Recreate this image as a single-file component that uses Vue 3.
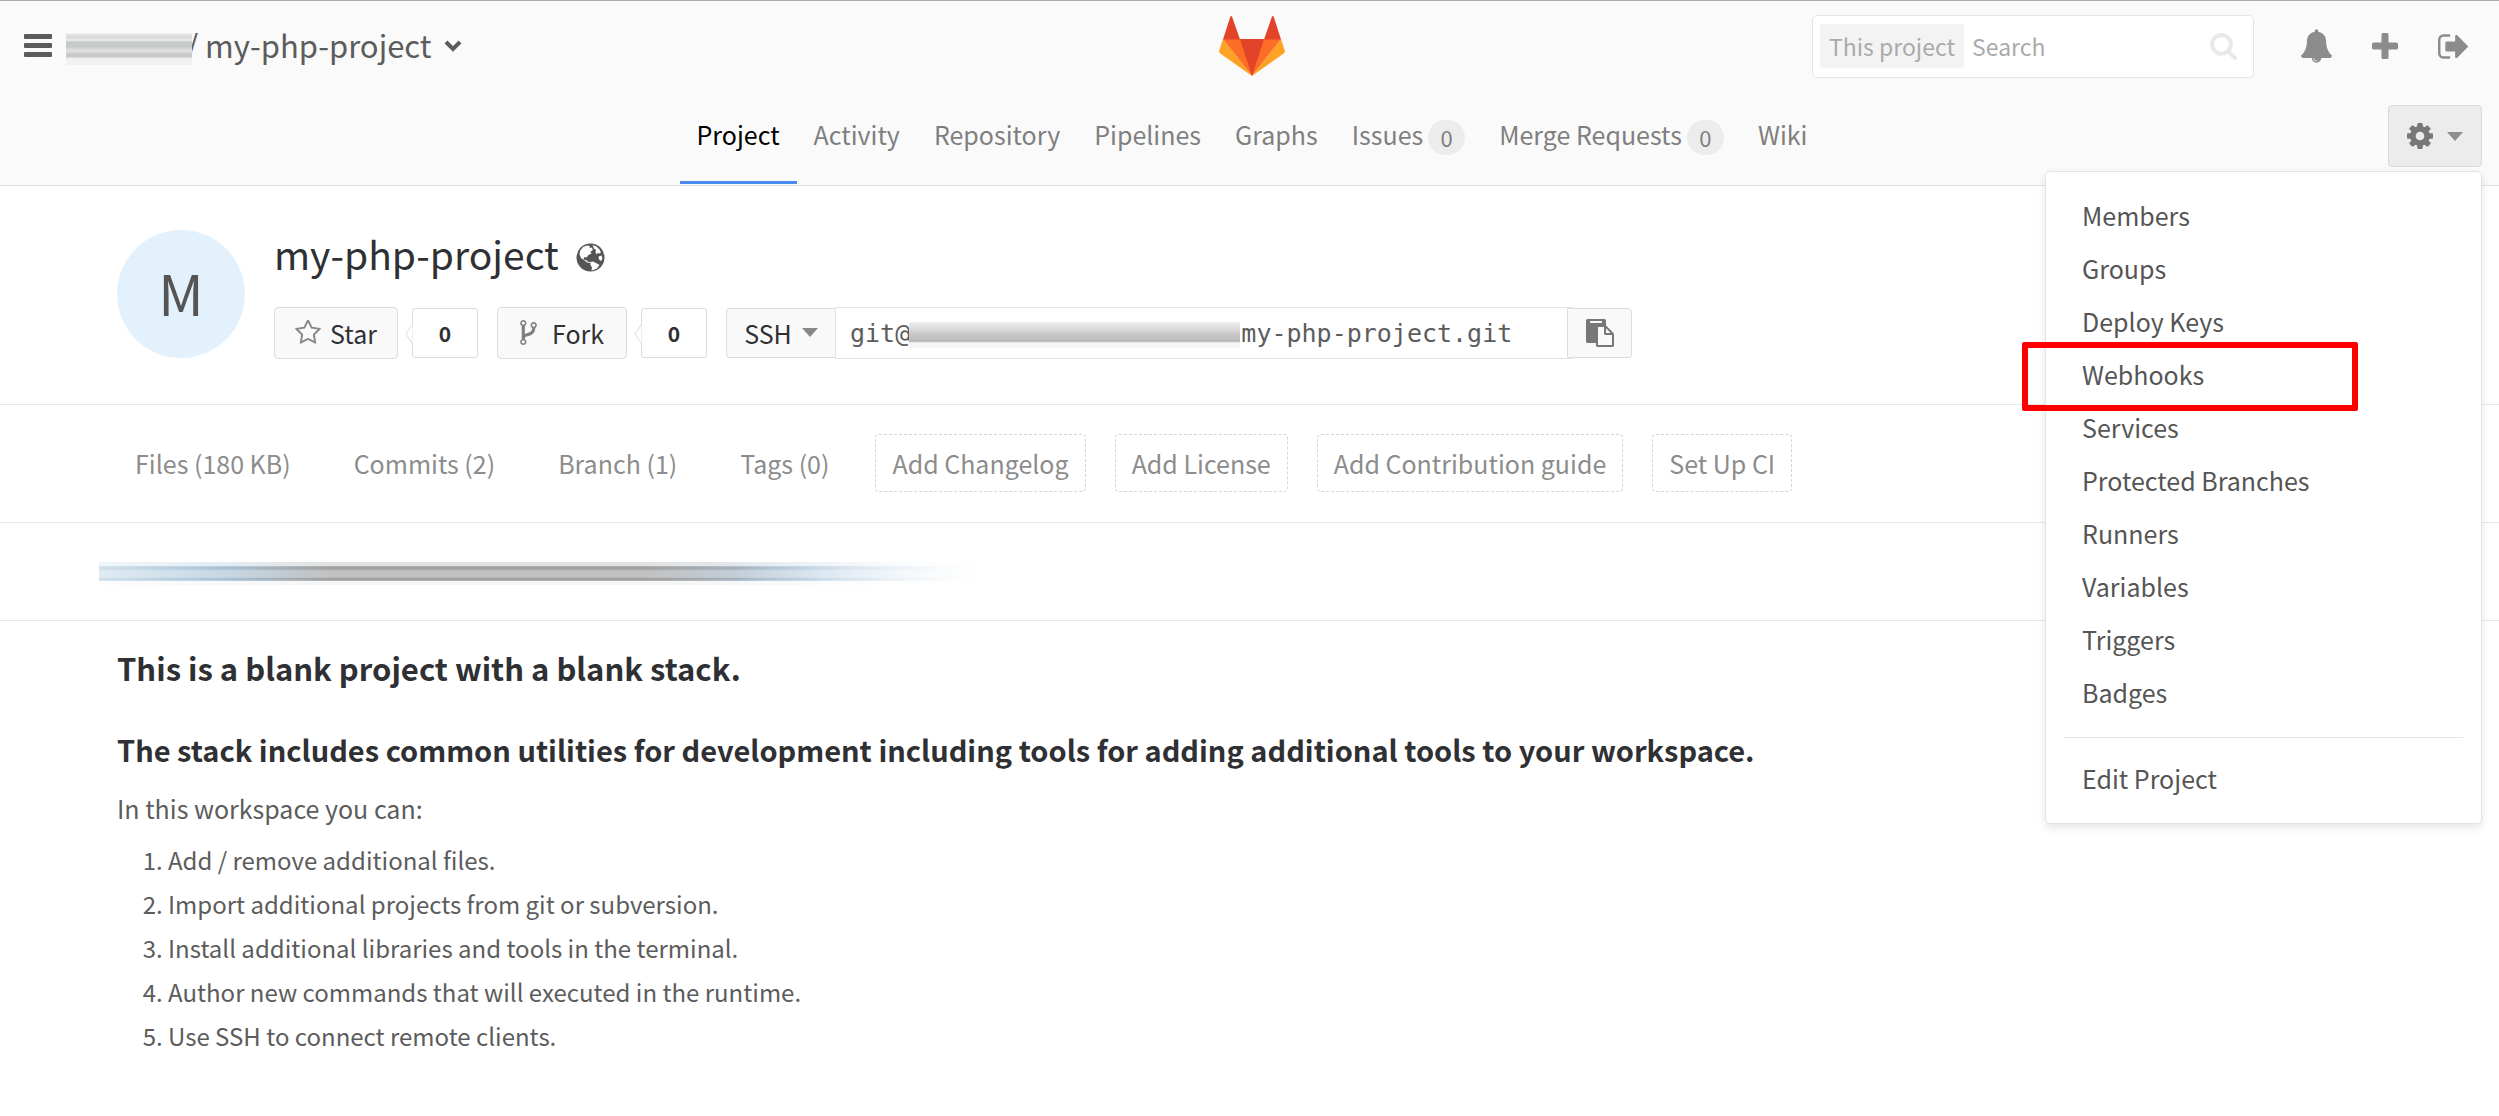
<script setup>
const tabs = [
  { label: 'Project', active: true },
  { label: 'Activity' },
  { label: 'Repository' },
  { label: 'Pipelines' },
  { label: 'Graphs' },
  { label: 'Issues', count: 0 },
  { label: 'Merge Requests', count: 0 },
  { label: 'Wiki' },
]

const settings = [
  'Members',
  'Groups',
  'Deploy Keys',
  'Webhooks',
  'Services',
  'Protected Branches',
  'Runners',
  'Variables',
  'Triggers',
  'Badges',
]

const stats = ['Files (180 KB)', 'Commits (2)', 'Branch (1)', 'Tags (0)']
const suggestions = ['Add Changelog', 'Add License', 'Add Contribution guide', 'Set Up CI']

const steps = [
  'Add / remove additional files.',
  'Import additional projects from git or subversion.',
  'Install additional libraries and tools in the terminal.',
  'Author new commands that will executed in the runtime.',
  'Use SSH to connect remote clients.',
]

const cloneUrl = 'git@' + '\u00a0'.repeat(22) + 'my-php-project.git'

const icons = {
  bell: 'M912 1696q0-16-16-16-59 0-101.5-42.5t-42.5-101.5q0-16-16-16t-16 16q0 73 51.5 124.5t124.5 51.5q16 0 16-16zm816-288q0 52-38 90t-90 38h-448q0 106-75 181t-181 75-181-75-75-181h-448q-52 0-90-38t-38-90q50-42 91-88t85-119.5 74.5-158.5 50-206 19.5-260q0-152 117-282.5t307-158.5q-8-19-8-39 0-40 28-68t68-28 68 28 28 68q0 20-8 39 190 28 307 158.5t117 282.5q0 139 19.5 260t50 206 74.5 158.5 85 119.5 91 88z',
  cog: 'M1152 896q0-106-75-181t-181-75-181 75-75 181 75 181 181 75 181-75 75-181zm512-109v222q0 12-8 23t-20 13l-185 28q-19 54-39 91 35 50 107 138 10 12 10 25t-9 23q-27 37-99 108t-94 71q-12 0-26-9l-138-108q-44 23-91 38-16 136-29 186-7 28-36 28h-222q-14 0-24.5-8.5t-11.5-21.5l-28-184q-49-16-90-37l-141 107q-10 9-25 9-14 0-25-11-126-114-165-168-7-10-7-23 0-12 8-23 15-21 51-66.5t54-70.5q-27-50-41-99l-183-27q-13-2-21-12.5t-8-23.5v-222q0-12 8-23t19-13l186-28q14-46 39-92-40-57-107-138-10-12-10-24 0-10 9-23 26-36 98.5-107.5t94.5-71.5q13 0 26 10l138 107q44-23 91-38 16-136 29-186 7-28 36-28h222q14 0 24.5 8.5t11.5 21.5l28 184q49 16 90 37l142-107q9-9 24-9 13 0 25 10 129 119 165 170 7 8 7 22 0 12-8 23-15 21-51 66.5t-54 70.5q26 50 41 98l183 28q13 2 21 12.5t8 23.5z',
  plus: 'M1600 736v192q0 40-28 68t-68 28h-416v416q0 40-28 68t-68 28h-192q-40 0-68-28t-28-68v-416h-416q-40 0-68-28t-28-68v-192q0-40 28-68t68-28h416v-416q0-40 28-68t68-28h192q40 0 68 28t28 68v416h416q40 0 68 28t28 68z',
  signOut: 'M704 1440q0 4 1 20t.5 26.5-3 23.5-10 19.5-20.5 6.5h-320q-119 0-203.5-84.5t-84.5-203.5v-704q0-119 84.5-203.5t203.5-84.5h320q13 0 22.5 9.5t9.5 22.5q0 4 1 20t.5 26.5-3 23.5-10 19.5-20.5 6.5h-320q-66 0-113 47t-47 113v704q0 66 47 113t113 47h312l11.5 1 11.5 3 8 5.5 7 9 2 13.5zm928-544q0 26-19 45l-544 544q-19 19-45 19t-45-19-19-45v-288h-448q-26 0-45-19t-19-45v-384q0-26 19-45t45-19h448v-288q0-26 19-45t45-19 45 19l544 544q19 19 19 45z',
  search: 'M1216 832q0-185-131.5-316.5t-316.5-131.5-316.5 131.5-131.5 316.5 131.5 316.5 316.5 131.5 316.5-131.5 131.5-316.5zm512 832q0 52-38 90t-90 38q-54 0-90-38l-343-342q-179 124-399 124-143 0-273.5-55.5t-225-150-150-225-55.5-273.5 55.5-273.5 150-225 225-150 273.5-55.5 273.5 55.5 225 150 150 225 55.5 273.5q0 220-124 399l343 343q37 37 37 90z',
  star: 'M1201 1004l306-297-422-62-189-382-189 382-422 62 306 297-73 421 378-199 377 199zm527-357q0 22-26 48l-363 354 86 500q1 7 1 20 0 50-41 50-19 0-40-12l-449-236-449 236q-22 12-40 12-21 0-31.5-14.5t-10.5-35.5q0-6 2-20l86-500-364-354q-25-27-25-48 0-37 56-46l502-73 225-455q19-41 49-41t49 41l225 455 502 73q56 9 56 46z',
  fork: 'M672 1472q0-40-28-68t-68-28-68 28-28 68 28 68 68 28 68-28 28-68zm0-1152q0-40-28-68t-68-28-68 28-28 68 28 68 68 28 68-28 28-68zm640 128q0-40-28-68t-68-28-68 28-28 68 28 68 68 28 68-28 28-68zm96 0q0 52-26 96.5t-70 69.5q-2 287-226 414-67 38-203 81-128 40-169.5 71t-41.5 100v26q44 25 70 69.5t26 96.5q0 80-56 136t-136 56-136-56-56-136q0-52 26-96.5t70-69.5v-820q-44-25-70-69.5t-26-96.5q0-80 56-136t136-56 136 56 56 136q0 52-26 96.5t-70 69.5v497q54-26 154-57 55-17 87.5-29.5t70.5-31 59-39.5 40.5-51 28-69.5 8.5-91.5q-44-25-70-69.5t-26-96.5q0-80 56-136t136-56 136 56 56 136z',
  paste: 'M768 1664h896v-640h-416q-40 0-68-28t-28-68v-416h-384v1152zm256-1440v-64q0-13-9.5-22.5t-22.5-9.5h-704q-13 0-22.5 9.5t-9.5 22.5v64q0 13 9.5 22.5t22.5 9.5h704q13 0 22.5-9.5t9.5-22.5zm256 672h299l-299-299v299zm512 128v672q0 40-28 68t-68 28h-960q-40 0-68-28t-28-68v-160h-544q-40 0-68-28t-28-68v-1344q0-40 28-68t68-28h1088q40 0 68 28t28 68v328q21 13 36 28l408 408q28 28 48 76t20 88z',
}
</script>

<template>
  <div class="page">
    <header class="header">
      <div class="bar">
        <div class="crumbs">
          <button class="plain" aria-label="Toggle navigation">
            <svg width="28" height="24" viewBox="0 0 28 24" fill="#5c5c5c">
              <rect width="28" height="5" rx="1" />
              <rect y="9" width="28" height="5" rx="1" />
              <rect y="18" width="28" height="5" rx="1" />
            </svg>
          </button>
          <span class="smear-owner"></span>
          <a href="#" class="crumb">/ my-php-project</a>
          <button class="plain" aria-label="Switch project">
            <svg width="18" height="12" viewBox="0 0 18 12" fill="none" stroke="#5c5c5c" stroke-width="4">
              <path d="M2 2l7 7 7-7" />
            </svg>
          </button>
        </div>

        <a href="#" class="logo" aria-label="Dashboard">
          <svg width="66" height="60" viewBox="0 0 66 60">
            <path fill="#fca326" d="M4 23L.3 34.200q-.6 2 1 3.200L33 60zM62 23l3.700 11.200q.6 2-1 3.200L33 60z" />
            <path fill="#fc6d26" d="M4 23h58L33 60z" />
            <path fill="#e24329" d="M21 23h24L33 60z" />
            <path fill="#e24329" d="M4 23.500L11.200 1Q12.200-.8 13.200 1L21 23.500z" />
            <path fill="#e24329" d="M62 23.500L54.800 1Q53.800-.8 52.800 1L45 23.500z" />
          </svg>
        </a>

        <div class="tools">
          <form class="search" @submit.prevent>
            <label class="scope" for="search">This project</label>
            <input id="search" type="text" placeholder="Search" />
            <svg width="27" height="27" viewBox="64 128 1664 1664" fill="#e7e9ed"><path :d="icons.search" /></svg>
          </form>
          <nav class="actions">
            <a href="#" aria-label="Todos"><svg width="31" height="34" viewBox="64 0 1664 1792"><path :d="icons.bell" /></svg></a>
            <a href="#" aria-label="New project"><svg width="26" height="26" viewBox="192 128 1408 1408"><path :d="icons.plus" /></svg></a>
            <a href="#" aria-label="Sign out"><svg width="30" height="25" viewBox="64 256 1568 1280"><path :d="icons.signOut" /></svg></a>
          </nav>
        </div>
      </div>

      <div class="subnav">
        <nav class="tabs">
          <a v-for="t in tabs" :key="t.label" href="#" class="tab" :class="{ active: t.active }">
            {{ t.label }}<span v-if="t.count !== undefined" class="badge">{{ t.count }}</span>
          </a>
        </nav>
        <div class="settings">
          <button class="gear" aria-label="Project settings" aria-expanded="true">
            <svg width="26" height="26" viewBox="128 128 1536 1536" fill="#7a7777"><path :d="icons.cog" /></svg>
            <svg width="16" height="9" viewBox="0 0 16 9" fill="#8f8f8f"><path d="M0 0h16L8 9z" /></svg>
          </button>
          <ul class="menu">
            <li v-for="s in settings" :key="s" :class="{ marked: s === 'Webhooks' }">
              <a href="#">{{ s }}</a>
            </li>
            <li class="divider" role="separator"></li>
            <li><a href="#">Edit Project</a></li>
          </ul>
        </div>
      </div>
    </header>

    <main>
      <section class="project">
        <div class="avatar">M</div>
        <div class="info">
          <h1>
            my-php-project
            <svg width="29" height="29" viewBox="0 0 29 29">
              <circle cx="14.500" cy="14.500" r="14" fill="#555" />
              <g fill="#fff">
                <path d="M4 8l3-4 4-1.500 3 .5-.5 2 2-.5 1.500 2-2.500 2.500 1 1.500-3 1.500-2 2.500-1.500-.5-1.500 1 1 2 1.500 0 1.500 1.500 2.500.5 1.500 1-4.500-.5-3-2.500-3-2-1.500-3.500z" />
                <path d="M14.500 19l2.500-.5 4 2 2.500 1.500-2.500 3.500-3.500 1.500-2 .5.500-3-1.500-2.500z" />
                <path d="M16.500 2l4 1.500 3 3 1.500 3-1.500 1-2-.5-1 1.500-1-2 .5-2.500-2-1.500z" />
                <path d="M22.500 13.500l3-1 1 3-1.500 2.500-2-1.500z" />
              </g>
            </svg>
          </h1>
          <div class="controls">
            <button class="btn star">
              <svg width="26" height="25" viewBox="64 96 1664 1600" fill="#8a8a8a"><path :d="icons.star" /></svg>
              Star
            </button>
            <span class="count">
              <svg width="8" height="22" viewBox="0 0 8 22" fill="#fff" stroke="#dcdcdc"><path d="M7.500 1L1 11l6.500 10" /></svg>
              0
            </span>
            <button class="btn fork">
              <svg width="17" height="25" viewBox="384 128 1024 1536" fill="#7f7f7f"><path :d="icons.fork" /></svg>
              Fork
            </button>
            <span class="count">
              <svg width="8" height="22" viewBox="0 0 8 22" fill="#fff" stroke="#dcdcdc"><path d="M7.500 1L1 11l6.500 10" /></svg>
              0
            </span>
            <div class="clone">
              <button class="btn protocol">
                SSH
                <svg width="16" height="9" viewBox="0 0 16 9" fill="#888"><path d="M0 0h16L8 9z" /></svg>
              </button>
              <div class="url">
                <input type="text" readonly aria-label="Project clone URL" :value="cloneUrl" />
                <span class="smear-url"></span>
              </div>
              <button class="btn copy" aria-label="Copy to clipboard">
                <svg width="28" height="28" viewBox="0 0 1792 1792" fill="#777"><path :d="icons.paste" /></svg>
              </button>
            </div>
          </div>
        </div>
      </section>

      <nav class="stats">
        <a v-for="s in stats" :key="s" href="#">{{ s }}</a>
        <a v-for="s in suggestions" :key="s" href="#" class="dashed">{{ s }}</a>
      </nav>

      <div class="commit"><div class="smear-commit"></div></div>

      <article class="readme">
        <h2>This is a blank project with a blank stack.</h2>
        <h3>The stack includes common utilities for development including tools for adding additional tools to your workspace.</h3>
        <p>In this workspace you can:</p>
        <ol>
          <li v-for="s in steps" :key="s">{{ s }}</li>
        </ol>
      </article>
    </main>
  </div>
</template>

<style>
body {
  margin: 0;
  background: #fff;
}
</style>

<style scoped>
.page {
  font-family: "Noto Sans CJK SC", "Noto Sans", sans-serif;
  font-size: 25px;
  color: #5c5c5c;
}

.page *,
.page *::after {
  box-sizing: border-box;
}

a {
  color: inherit;
  text-decoration: none;
}

svg {
  display: block;
  flex: none;
}

button,
input {
  font: inherit;
  color: inherit;
}

.plain {
  padding: 0;
  border: 0;
  background: none;
}

/* Header */
.header {
  border-top: 1px solid #adadad;
  border-bottom: 1px solid #e2e2e2;
  background: #fafafa;
}

.bar,
.subnav {
  display: grid;
  grid-template-columns: 1fr auto 1fr;
  align-items: center;
  padding-left: 5px;
}

.bar {
  height: 90px;
}

.crumbs {
  display: flex;
  align-items: center;
  padding-left: 19px;
}

.smear-owner {
  z-index: 1;
  width: 126px;
  height: 32px;
  margin: 5px -6px 0 14px;
  background: linear-gradient(#f2f2f2, #dadada 10% 16%, #efefef 22%, #c6c9ca 28% 42%, #e2e2e2 56%, #c8caca 66% 74%, #f1f1f1 80%);
}

.crumb {
  padding-bottom: 3px;
  margin-right: 12px;
  font-size: 31px;
  line-height: 44px;
}

.tools {
  display: flex;
  align-items: center;
  justify-content: flex-end;
  gap: 47px;
  padding-right: 31px;
}

.search {
  display: flex;
  align-items: center;
  width: 442px;
  height: 63px;
  padding: 0 16px 0 7px;
  border: 1px solid #e5e5e5;
  border-radius: 5px;
  background: #fff;
  font-size: 23px;
  color: #aaa;
}

.scope {
  flex: none;
  padding: 0 9px;
  border-radius: 3px;
  background: #f3f3f3;
  line-height: 44px;
}

.search input {
  flex: 1;
  min-width: 0;
  height: 44px;
  padding: 0 8px;
  border: 0;
  outline: 0;
  background: none;
}

.search input::placeholder {
  color: #aaa;
  opacity: 1;
}

.actions {
  display: flex;
  align-items: center;
  gap: 40px;
  fill: #8c8c8c;
}

/* Project tabs */
.tabs {
  display: flex;
  grid-column: 2;
  height: 94px;
  padding-bottom: 1px;
}

.tab {
  display: flex;
  align-items: center;
  gap: 5px;
  padding: 0 17px 5px;
  border-bottom: 3px solid transparent;
  color: #7f7f7f;
}

.tab.active {
  border-color: #4a8bee;
  color: #000;
}

.badge {
  width: 37px;
  margin-top: 8px;
  border-radius: 18px;
  background: #ececec;
  font-size: 22px;
  line-height: 35px;
  text-align: center;
}

.settings {
  position: relative;
  justify-self: end;
  margin: 0 17px 4px 0;
}

.gear {
  display: flex;
  align-items: center;
  justify-content: center;
  gap: 14px;
  width: 94px;
  height: 62px;
  padding: 0;
  border: 1px solid #d6dae2;
  border-radius: 4px;
  background: #ececec;
}

.menu {
  position: absolute;
  z-index: 2;
  top: 66px;
  right: 0;
  width: 437px;
  margin: 0;
  padding: 17px 0 18px;
  border: 1px solid #e3e3e3;
  border-radius: 5px;
  background: #fff;
  box-shadow: 0 4px 8px rgba(0, 0, 0, 0.1);
  color: #555;
  line-height: 53px;
  list-style: none;
}

.menu li {
  position: relative;
  padding-left: 36px;
}

.menu a {
  display: block;
}

.menu .divider {
  height: 1px;
  margin: 18px 18px 14px;
  padding: 0;
  background: #e5e5e5;
}

.marked::after {
  content: "";
  position: absolute;
  top: -6px;
  left: -24px;
  width: 336px;
  height: 69px;
  border: 6px solid #f00;
  border-radius: 2px;
  pointer-events: none;
}

/* Project summary */
.project {
  display: flex;
  gap: 29px;
  padding: 44px 117px 45px;
  border-bottom: 1px solid #e8e8e8;
}

.avatar {
  flex: none;
  width: 128px;
  height: 128px;
  border-radius: 50%;
  background: #e3f1fd;
  color: #555;
  font-size: 56px;
  line-height: 124px;
  text-align: center;
}

h1 {
  display: flex;
  align-items: center;
  gap: 17px;
  margin: 0 0 31px;
  color: #2f3033;
  font-size: 39px;
  font-weight: 400;
  line-height: 46px;
}

h1 svg {
  margin-top: 8px;
}

.controls {
  display: flex;
  align-items: center;
}

.btn {
  display: flex;
  align-items: center;
  justify-content: center;
  height: 52px;
  padding: 0 0 1px;
  border: 1px solid #dcdcdc;
  border-radius: 4px;
  background: #f9f9f9;
  color: #2f3033;
  font-size: 25px;
}

.star {
  gap: 9px;
  width: 124px;
}

.fork {
  gap: 15px;
  width: 130px;
}

.count {
  position: relative;
  width: 66px;
  margin: 0 19px 0 14px;
  border: 1px solid #dcdcdc;
  border-radius: 3px;
  color: #2f3033;
  font-size: 21px;
  font-weight: 700;
  line-height: 48px;
  text-align: center;
}

.count svg {
  position: absolute;
  top: 14px;
  left: -8px;
}

.clone {
  display: flex;
  align-items: center;
}

.protocol {
  gap: 10px;
  width: 109px;
  height: 50px;
  border-right: 0;
  border-radius: 4px 0 0 4px;
}

.url {
  position: relative;
}

.url input {
  display: block;
  width: 738px;
  height: 52px;
  padding: 0 14px;
  border: 1px solid #e5e5e5;
  outline: 0;
  background: #fff;
  font-family: "DejaVu Sans Mono", monospace;
}

.smear-url {
  position: absolute;
  top: 15px;
  left: 74px;
  width: 331px;
  height: 26px;
  background: linear-gradient(#f0f0f0, #dedede 20%, #d0d0d0 40%, #c4c4c4 50% 64%, #b4b4b4 74%, #f5f5f5 80%);
}

.copy {
  z-index: 1;
  width: 65px;
  height: 50px;
  margin-left: -6px;
  border-radius: 0 4px 4px 0;
}

/* Stats */
.stats {
  display: flex;
  gap: 29px;
  padding: 29px 118px 30px;
  border-bottom: 1px solid #e8e8e8;
  color: #8c8c8c;
  line-height: 56px;
}

.stats a {
  padding: 0 16px;
  border: 1px solid transparent;
}

.stats .dashed {
  border: 1px dashed #d5d5d5;
  border-radius: 4px;
}

.commit {
  padding: 39px 99px 35px;
  border-bottom: 1px solid #e8e8e8;
}

.smear-commit {
  width: 885px;
  height: 23px;
  background:
    linear-gradient(90deg, transparent 72%, #fff),
    linear-gradient(rgba(255, 255, 255, 0.7) 0 18%, transparent 20% 30%, rgba(255, 255, 255, 0.35) 38% 66%, transparent 72% 80%, rgba(255, 255, 255, 0.9) 82%),
    linear-gradient(90deg, #cfe0ec, #a9c3d6 14%, #a0a0a0 26% 62%, #a9c3da 80%, #e6f0f7);
}

/* Readme */
.readme {
  padding: 23px 117px;
}

h2,
h3 {
  margin: 0;
  color: #2f3033;
  font-weight: 700;
  line-height: 48px;
}

h2 {
  font-size: 31px;
}

h3 {
  margin: 33px 0 13px;
  font-size: 29px;
}

p {
  margin: 0;
  line-height: 44px;
}

ol {
  margin: 8px 0 0;
  padding-left: 51px;
  font-size: 24px;
  line-height: 44px;
}
</style>
